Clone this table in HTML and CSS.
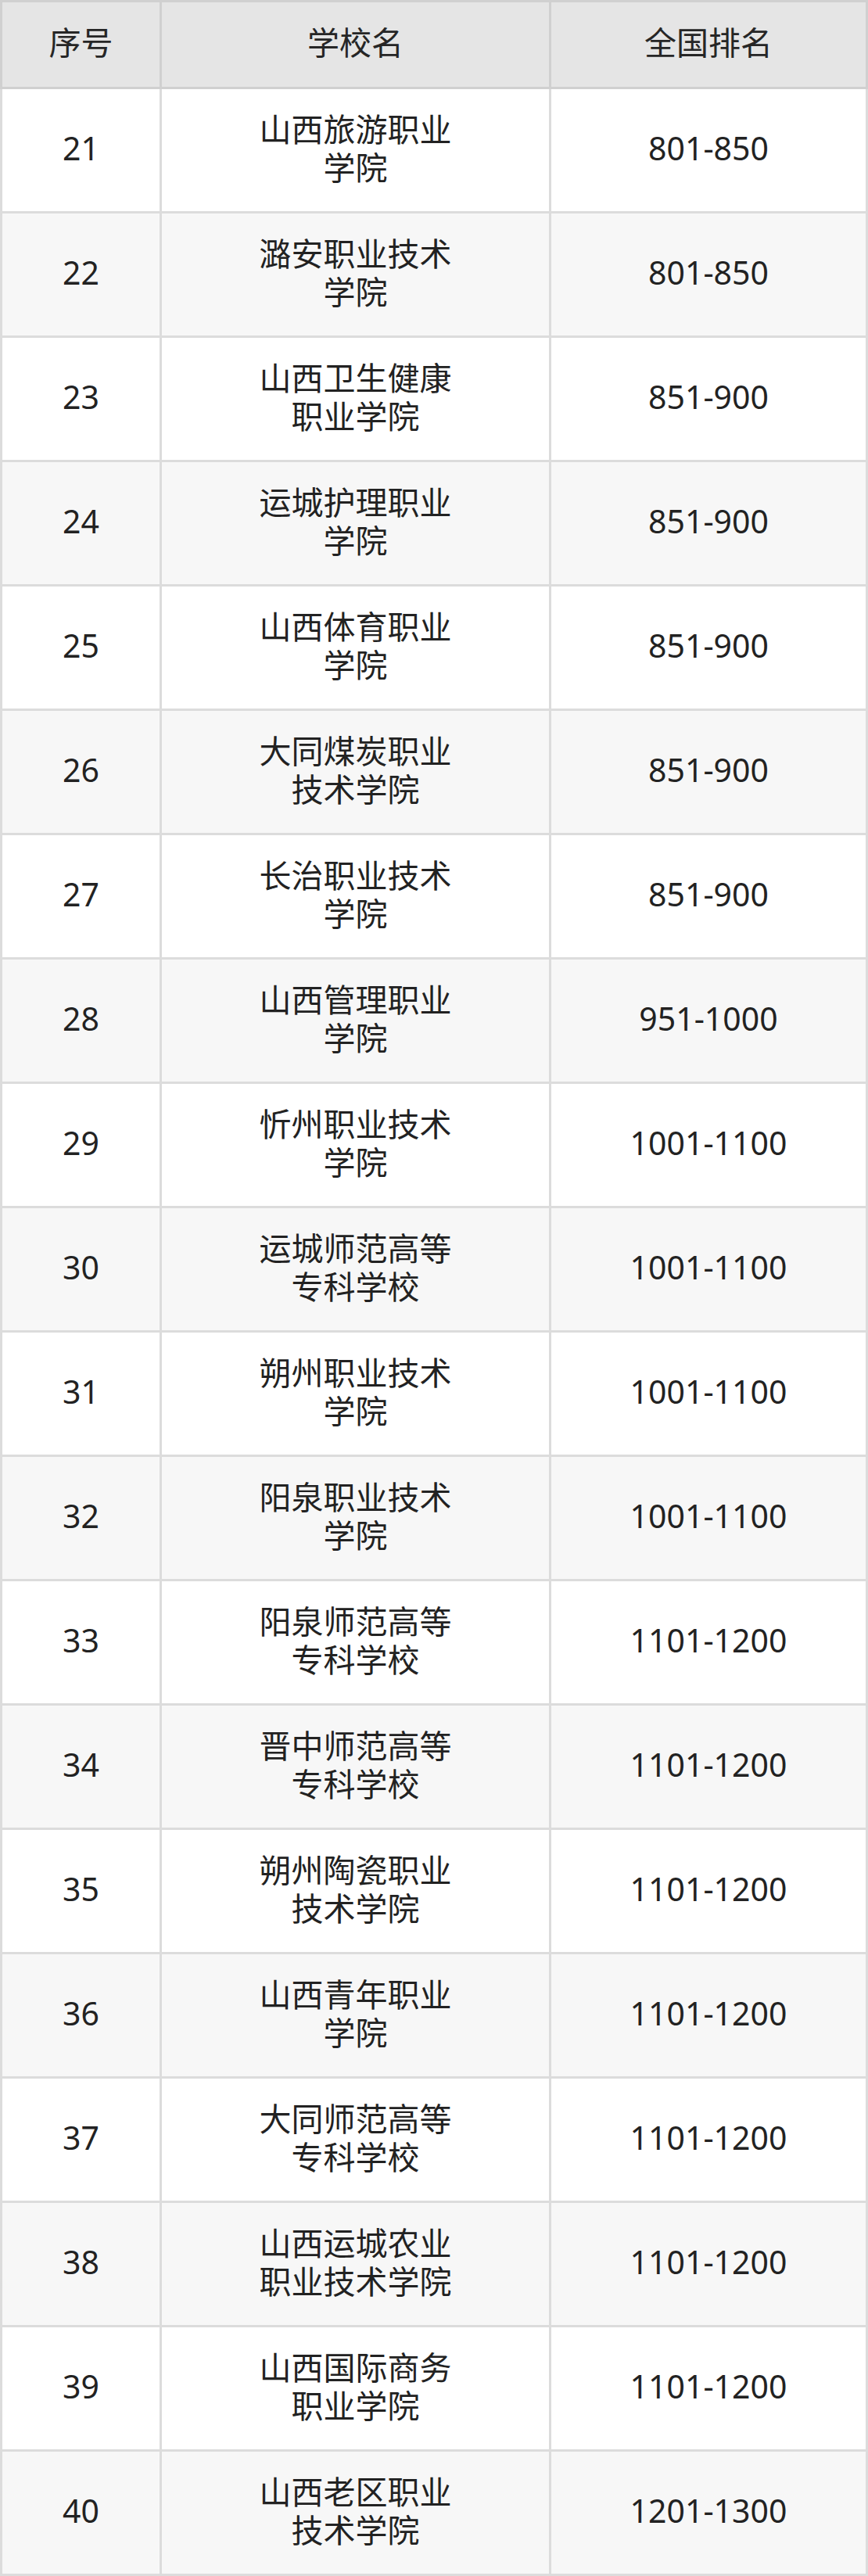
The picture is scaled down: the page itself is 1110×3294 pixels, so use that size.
FILE: index.html
```html
<!DOCTYPE html>
<html lang="zh-CN">
<head>
<meta charset="utf-8">
<title>排名</title>
<link rel="stylesheet" href="styles.css">
</head>
<body>
<div class="table">
  <div class="head">
    <div class="cell">序号</div>
    <div class="cell">学校名</div>
    <div class="cell">全国排名</div>
  </div>
  <div class="row"><div class="cell">21</div><div class="cell"><span class="name">山西旅游职业学院</span></div><div class="cell">801-850</div></div>
  <div class="row alt"><div class="cell">22</div><div class="cell"><span class="name">潞安职业技术学院</span></div><div class="cell">801-850</div></div>
  <div class="row"><div class="cell">23</div><div class="cell"><span class="name">山西卫生健康职业学院</span></div><div class="cell">851-900</div></div>
  <div class="row alt"><div class="cell">24</div><div class="cell"><span class="name">运城护理职业学院</span></div><div class="cell">851-900</div></div>
  <div class="row"><div class="cell">25</div><div class="cell"><span class="name">山西体育职业学院</span></div><div class="cell">851-900</div></div>
  <div class="row alt"><div class="cell">26</div><div class="cell"><span class="name">大同煤炭职业技术学院</span></div><div class="cell">851-900</div></div>
  <div class="row"><div class="cell">27</div><div class="cell"><span class="name">长治职业技术学院</span></div><div class="cell">851-900</div></div>
  <div class="row alt"><div class="cell">28</div><div class="cell"><span class="name">山西管理职业学院</span></div><div class="cell">951-1000</div></div>
  <div class="row"><div class="cell">29</div><div class="cell"><span class="name">忻州职业技术学院</span></div><div class="cell">1001-1100</div></div>
  <div class="row alt"><div class="cell">30</div><div class="cell"><span class="name">运城师范高等专科学校</span></div><div class="cell">1001-1100</div></div>
  <div class="row"><div class="cell">31</div><div class="cell"><span class="name">朔州职业技术学院</span></div><div class="cell">1001-1100</div></div>
  <div class="row alt"><div class="cell">32</div><div class="cell"><span class="name">阳泉职业技术学院</span></div><div class="cell">1001-1100</div></div>
  <div class="row"><div class="cell">33</div><div class="cell"><span class="name">阳泉师范高等专科学校</span></div><div class="cell">1101-1200</div></div>
  <div class="row alt"><div class="cell">34</div><div class="cell"><span class="name">晋中师范高等专科学校</span></div><div class="cell">1101-1200</div></div>
  <div class="row"><div class="cell">35</div><div class="cell"><span class="name">朔州陶瓷职业技术学院</span></div><div class="cell">1101-1200</div></div>
  <div class="row alt"><div class="cell">36</div><div class="cell"><span class="name">山西青年职业学院</span></div><div class="cell">1101-1200</div></div>
  <div class="row"><div class="cell">37</div><div class="cell"><span class="name">大同师范高等专科学校</span></div><div class="cell">1101-1200</div></div>
  <div class="row alt"><div class="cell">38</div><div class="cell"><span class="name">山西运城农业职业技术学院</span></div><div class="cell">1101-1200</div></div>
  <div class="row"><div class="cell">39</div><div class="cell"><span class="name">山西国际商务职业学院</span></div><div class="cell">1101-1200</div></div>
  <div class="row alt"><div class="cell">40</div><div class="cell"><span class="name">山西老区职业技术学院</span></div><div class="cell">1201-1300</div></div>
</div>
</body>
</html>
```
FILE: styles.css
```css
html, body {
  margin: 0;
  padding: 0;
  background: #ffffff;
}
body {
  font-family: "Noto Sans", "Noto Sans CJK SC", sans-serif;
  font-size: 41px;
  color: #222222;
}
.table {
  width: 1110px;
  display: flex;
  flex-direction: column;
}
.head, .row {
  display: grid;
  grid-template-columns: 201px 495px 402px;
  column-gap: 3px;
}
.head {
  background: #d0d0d0;
  padding: 3px;
}
.head .cell {
  height: 108px;
  background: #e5e5e5;
  color: #262626;
}
.row {
  background: #dcdcdc;
  padding: 0 3px 3px;
}
.row .cell {
  height: 156px;
  background: #ffffff;
}
.row.alt .cell {
  background: #f7f7f7;
}
.cell {
  box-sizing: border-box;
  padding-bottom: 5px;
  display: flex;
  align-items: center;
  justify-content: center;
  text-align: center;
  line-height: 49px;
}
.name {
  display: block;
  max-width: 262px;
}
```
